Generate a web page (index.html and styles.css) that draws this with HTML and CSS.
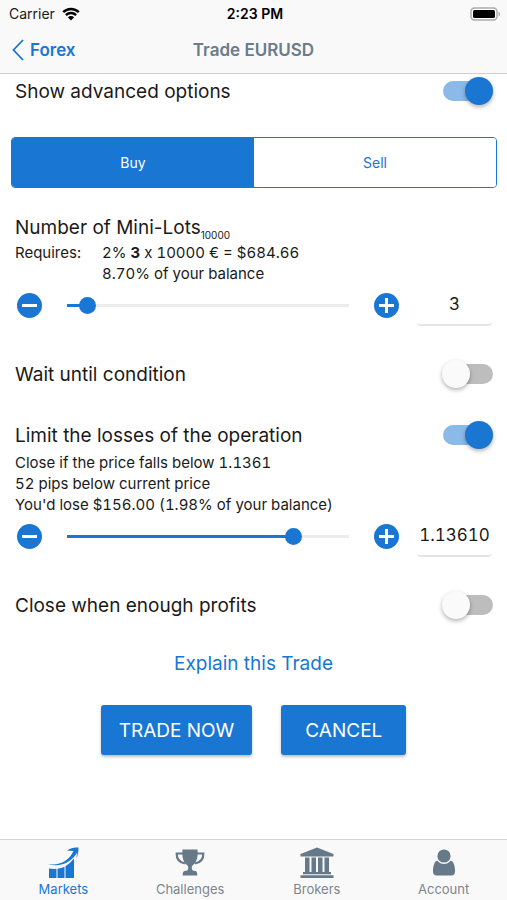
FILE: index.html
```html
<!DOCTYPE html>
<html lang="en">
<head>
    <meta charset="UTF-8" />
    <meta name="viewport" content="width=device-width, initial-scale=1.0"/>
    <title>Trade EURUSD</title>

    <link rel="stylesheet" href="styles.css">
</head>
<body>

<header class="header">
    <div class="status-bar">
        <div class="carrier">
            Carrier
            <svg class="wifi" viewBox="0 0 18 14" aria-hidden="true">
                <path d="M1.2 5.2a11 11 0 0 1 15.6 0M3.9 8.1a7.2 7.2 0 0 1 10.2 0" fill="none" stroke="#000" stroke-width="2.4"/>
                <path d="M5.9 10.3a4.4 4.4 0 0 1 6.2 0L9 13.5z"/>
            </svg>
        </div>
        <div class="time">2:23 PM</div>
        <svg class="battery" viewBox="0 0 31 14" aria-hidden="true">
            <rect x="1" y="1" width="26" height="12" rx="3.5" fill="#fff" stroke="#aaa" stroke-width="1.4"/>
            <rect x="3" y="3" width="22" height="8" rx="1.5"/>
            <path d="M28.5 4.5a2.8 2.8 0 0 1 0 5z" fill="#aaa"/>
        </svg>
    </div>
    <nav class="nav-bar">
        <a href="#" class="back">
            <svg viewBox="0 0 12 22" aria-hidden="true"><path d="M11 1L1.5 11L11 21" fill="none" stroke="currentColor" stroke-width="1.8"/></svg>
            Forex
        </a>
        <h1>Trade EURUSD</h1>
    </nav>
</header>

<main class="content">
    <div class="row">
        <label for="advanced">Show advanced options</label>
        <input type="checkbox" id="advanced" class="toggle" checked>
    </div>

    <div class="segment">
        <button type="button" class="segment-btn active">Buy</button>
        <button type="button" class="segment-btn">Sell</button>
    </div>

    <section class="block">
        <div class="row">
            <label for="lots">Number of Mini-Lots<sub>10000</sub></label>
        </div>
        <div class="details requires">
            <span>Requires:</span>
            <span>2% <b>3</b> x 10000 € = $684.66<br>8.70% of your balance</span>
        </div>
        <div class="stepper">
            <button type="button" class="round-btn" aria-label="Fewer lots">
                <svg viewBox="0 0 25 25"><path d="M5 12.5h15"/></svg>
            </button>
            <input type="range" class="slider" aria-label="Lots slider" min="0" max="69" value="3" style="--fill: 7%">
            <button type="button" class="round-btn" aria-label="More lots">
                <svg viewBox="0 0 25 25"><path d="M5 12.5h15M12.5 5v15"/></svg>
            </button>
            <input type="text" id="lots" class="value" value="3">
        </div>
    </section>

    <div class="row block">
        <label for="wait">Wait until condition</label>
        <input type="checkbox" id="wait" class="toggle">
    </div>

    <section class="block">
        <div class="row">
            <label for="limit">Limit the losses of the operation</label>
            <input type="checkbox" id="limit" class="toggle" checked>
        </div>
        <div class="details losses">
            Close if the price falls below 1.1361<br>
            52 pips below current price<br>
            You'd lose $156.00 (1.98% of your balance)
        </div>
        <div class="stepper">
            <button type="button" class="round-btn" aria-label="Lower price">
                <svg viewBox="0 0 25 25"><path d="M5 12.5h15"/></svg>
            </button>
            <input type="range" class="slider" aria-label="Price slider" min="1.1" max="1.1438" step="0.0001" value="1.1361" style="--fill: 80%">
            <button type="button" class="round-btn" aria-label="Raise price">
                <svg viewBox="0 0 25 25"><path d="M5 12.5h15M12.5 5v15"/></svg>
            </button>
            <input type="text" class="value" aria-label="Stop price" value="1.13610">
        </div>
    </section>

    <div class="row">
        <label for="profits">Close when enough profits</label>
        <input type="checkbox" id="profits" class="toggle">
    </div>

    <a href="#" class="explain">Explain this Trade</a>

    <div class="actions">
        <button type="button" class="action-btn">TRADE NOW</button>
        <button type="button" class="action-btn cancel">CANCEL</button>
    </div>
</main>

<nav class="tab-bar">
    <a href="#" class="tab active">
        <svg viewBox="0 0 32 32" aria-hidden="true">
            <path d="M2 21.5q4 .7 7.5.3V31H2zM10.500 21.700q4-.6 7-2V31h-7zM18.500 19.300q4-2.300 8.500-7.800V31h-8.500z"/>
            <path d="M1 17c12 4 24-2 29-11.500L29.500 11.500C31 8 31.500 4 31.500.5 28 .5 23 1 20 3.500L26.500 4C22 14 12 19 1 17z"/>
        </svg>
        Markets
    </a>
    <a href="#" class="tab">
        <svg viewBox="0 0 32 32" aria-hidden="true">
            <path d="M8.500 2.500h15c.8 8-1 13-4.500 15.500-1 .8-1.200 1.800-1.200 3 0 2 1 2.800 3.200 3 1.500.2 2.300.8 2.300 4.500H8.700c0-3.700.8-4.300 2.300-4.500 2.200-.2 3.200-1 3.200-3 0-1.200-.2-2.200-1.200-3C9.500 15.500 7.700 10.500 8.500 2.500z"/>
            <path class="handles" d="M9 6.500H2.700C2.500 12 6 15.500 11 16.500M23 6.500h6.300c.2 5.500-3.300 9-8.300 10"/>
        </svg>
        Challenges
    </a>
    <a href="#" class="tab">
        <svg class="wide" viewBox="0 0 34 32" aria-hidden="true">
            <path d="M17 .5L33.500 7v2.500H.5V7zM5 10.500h4.500V25H5zM11.500 10.500H16V25h-4.500zM18 10.500h4.500V25H18zM24.500 10.500H29V25h-4.500zM3 25h28v2.300H3zM.5 28.300h33V31H.5z"/>
        </svg>
        Brokers
    </a>
    <a href="#" class="tab">
        <svg viewBox="0 0 32 32" aria-hidden="true">
            <path d="M10 13.500h12c3.500.5 5 5 5 11 0 2.500-1.500 4-3.500 4h-15c-2 0-3.500-1.500-3.500-4 0-6 1.500-10.500 5-11z"/>
            <circle class="head" cx="16" cy="9" r="7.300"/>
        </svg>
        Account
    </a>
</nav>

<script>
    const sliders = document.querySelectorAll('.slider');
    const segmentButtons = document.querySelectorAll('.segment-btn');

    // Move the filled part of the track along with the thumb
    sliders.forEach(slider => {
        slider.addEventListener('input', () => {
            const part = (slider.value - slider.min) / (slider.max - slider.min);
            slider.style.setProperty('--fill', part * 100 + '%');
        });
    });

    segmentButtons.forEach(btn => {
        btn.addEventListener('click', () => {
            segmentButtons.forEach(b => b.classList.remove('active'));
            btn.classList.add('active');
        });
    });
</script>

</body>
</html>
```
FILE: styles.css
```css
* {
    box-sizing: border-box;
}

body {
    margin: 0;
    font-family: Inter, "Liberation Sans", sans-serif;
    background: #fff;
    color: #1a1a1a;
    min-height: 100vh;
    display: flex;
    flex-direction: column;
}

a {
    color: #1976d2;
    text-decoration: none;
}

button {
    border: none;
    padding: 0;
    font-family: inherit;
    cursor: pointer;
}

/* Header */
.header {
    background: #f9f9f9;
    border-bottom: 1px solid #cfcfcf;
}

.status-bar,
.nav-bar {
    display: grid;
    grid-template-columns: 1fr auto 1fr;
    align-items: center;
}

.status-bar {
    height: 27px;
    padding: 0 6px 0 9px;
    font-size: 14px;
}

.carrier {
    display: flex;
    align-items: center;
    gap: 7px;
}

.wifi {
    width: 18px;
    height: 14px;
}

.time {
    color: #000;
    font-weight: 600;
}

.battery {
    width: 31px;
    height: 14px;
    justify-self: end;
}

.nav-bar {
    height: 46px;
    padding: 0 12px;
}

.back {
    display: flex;
    align-items: center;
    gap: 6px;
    font-size: 17px;
    font-weight: 600;
}

.back svg {
    width: 12px;
    height: 22px;
}

h1 {
    margin: 0;
    font-size: 17px;
    font-weight: 600;
    color: #6b7c8a;
}

/* Form */
.content {
    flex: 1;
    padding-top: 4px;
}

.row {
    display: flex;
    align-items: center;
    justify-content: space-between;
    height: 26px;
    padding: 0 14px 0 15px;
    font-size: 19px;
}

.row sub {
    font-size: 10px;
    line-height: 1;
}

.block {
    margin-bottom: 35px;
}

.toggle {
    appearance: none;
    position: relative;
    width: 50px;
    height: 20px;
    margin: 0;
    border-radius: 10px;
    background: #bdbdbd;
}

.toggle::before {
    content: "";
    position: absolute;
    top: -4px;
    left: -1px;
    width: 28px;
    height: 28px;
    border-radius: 50%;
    background: #fafafa;
    box-shadow: 0 2px 4px rgba(0,0,0,0.3);
}

.toggle:checked {
    background: #8cbae8;
}

.toggle:checked::before {
    left: 22px;
    background: #1976d2;
}

.segment {
    display: flex;
    margin: 33px 10px 27px 11px;
    border: 1px solid #1976d2;
    border-radius: 4px;
    overflow: hidden;
}

.segment-btn {
    flex: 1;
    height: 49px;
    font-size: 14px;
    background: #fff;
    color: #1976d2;
}

.segment-btn.active {
    background: #1976d2;
    color: #fff;
}

.details {
    padding: 1px 15px 0;
    font-size: 15px;
    font-variant-numeric: tabular-nums;
    line-height: 21px;
}

.losses {
    padding-top: 4px;
}

.requires {
    display: flex;
    gap: 21px;
}

.stepper {
    display: grid;
    grid-template-columns: 25px 1fr 25px 75px;
    column-gap: 18px;
    align-items: center;
    height: 42px;
    padding: 0 15px 0 17px;
}

.round-btn {
    width: 25px;
    height: 25px;
    border-radius: 50%;
    background: #1976d2;
}

.round-btn svg {
    display: block;
    stroke: #fff;
    stroke-width: 3;
}

.slider {
    appearance: none;
    min-width: 0;
    height: 17px;
    margin: 0 7px;
    background: linear-gradient(#1976d2, #1976d2) left center / var(--fill) 3px no-repeat,
                linear-gradient(#ececec, #ececec) center / 100% 3px no-repeat;
}

.slider::-webkit-slider-thumb {
    appearance: none;
    width: 17px;
    height: 17px;
    border-radius: 50%;
    background: #1976d2;
}

.value {
    width: 100%;
    height: 42px;
    padding: 0;
    border: none;
    border-bottom: 2px solid #e4e4e4;
    border-radius: 4px;
    background: none;
    font-family: inherit;
    font-size: 17px;
    font-variant-numeric: tabular-nums;
    color: #1a1a1a;
    text-align: center;
}

.explain {
    display: block;
    margin-top: 33px;
    font-size: 19px;
    line-height: 26px;
    text-align: center;
}

.actions {
    display: flex;
    justify-content: center;
    gap: 29px;
    margin: 28px 0;
}

.action-btn {
    height: 50px;
    padding: 0 18px;
    border-radius: 3px;
    background: #1976d2;
    box-shadow: 0 2px 3px rgba(0,0,0,0.25);
    color: #fff;
    font-size: 19px;
}

.action-btn.cancel {
    padding: 0 24px;
}

/* Tabs */
.tab-bar {
    display: flex;
    height: 61px;
    padding-top: 7px;
    background: #f9f9f9;
    border-top: 1px solid #d4d4d4;
}

.tab {
    flex: 1;
    display: flex;
    flex-direction: column;
    align-items: center;
    font-size: 13px;
    line-height: 20px;
    color: #7d868e;
}

.tab svg {
    width: 32px;
    height: 32px;
    fill: #667989;
}

.tab .wide {
    width: 34px;
}

.tab .handles {
    fill: none;
    stroke: #667989;
    stroke-width: 2.2;
}

.tab .head {
    stroke: #f9f9f9;
    stroke-width: 1.4;
}

.tab.active {
    color: #1976d2;
}

.tab.active svg {
    fill: #1976d2;
}
```
